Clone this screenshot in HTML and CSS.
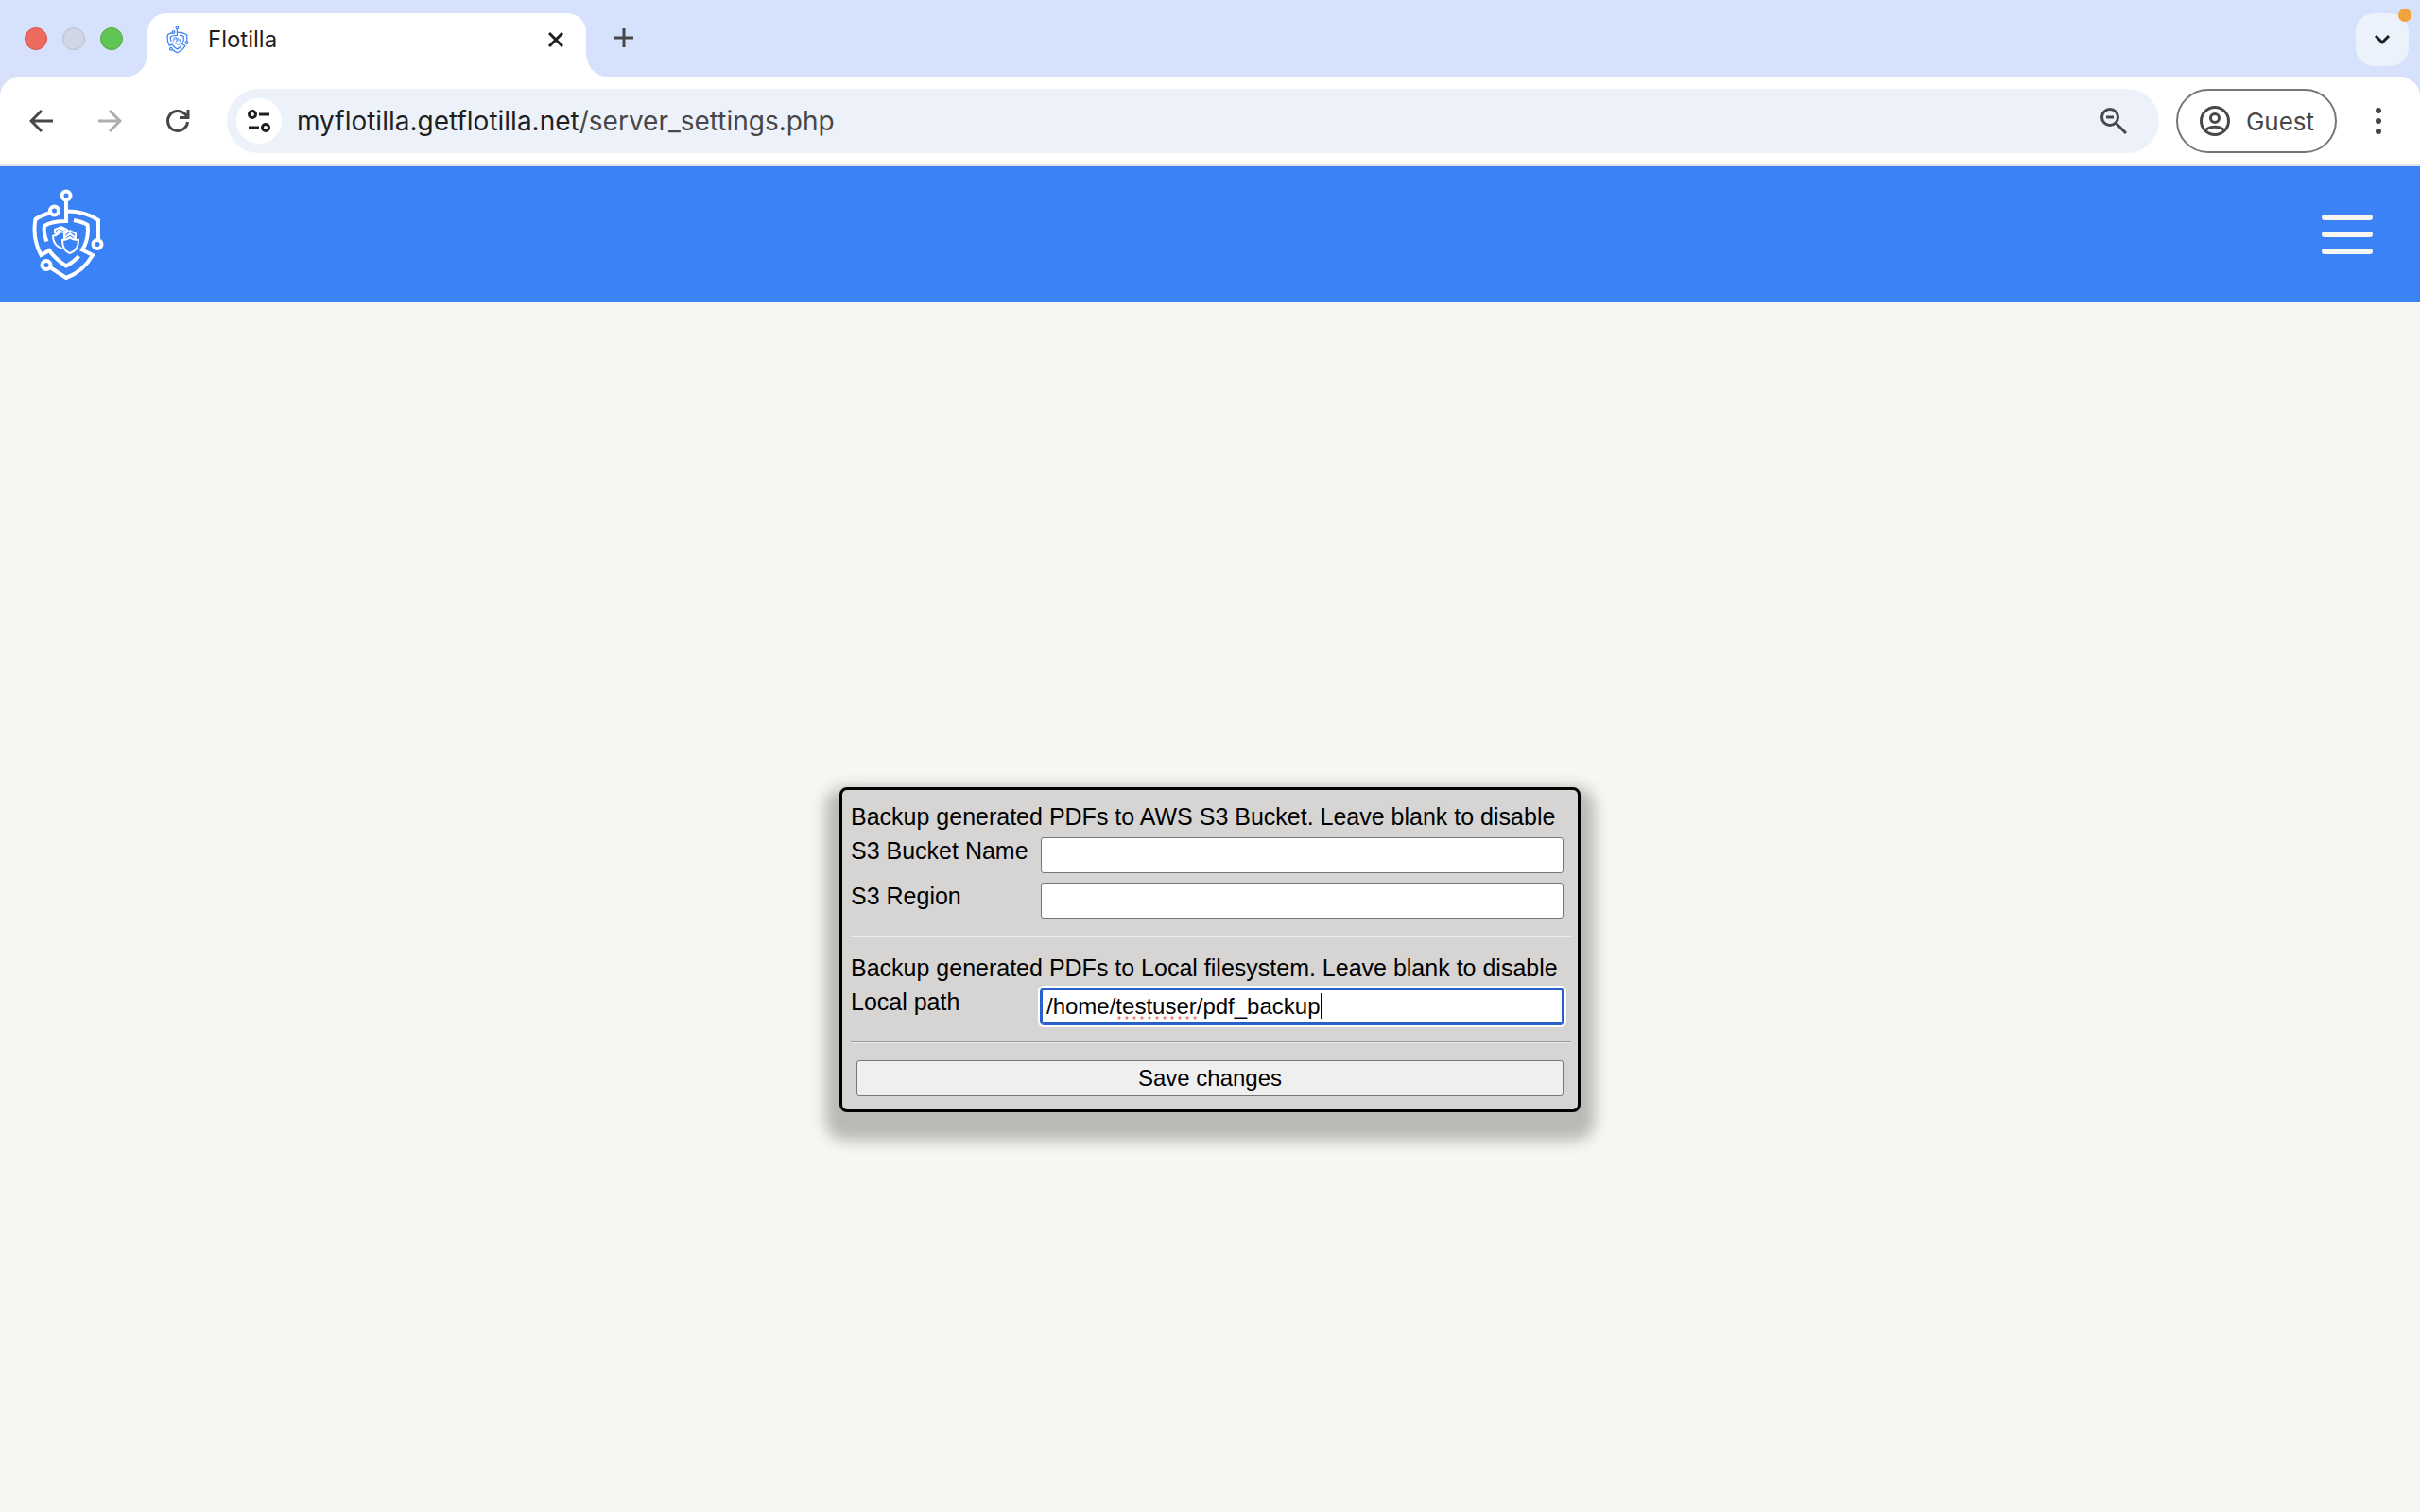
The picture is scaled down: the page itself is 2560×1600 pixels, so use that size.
FILE: index.html
```html
<!DOCTYPE html>
<html lang="en">
<head>
<meta charset="utf-8">
<title>Flotilla</title>
<link rel="stylesheet" href="styles.css">
</head>
<body>
<svg class="defs" aria-hidden="true">
  <symbol id="logo" viewBox="0 0 76 98">
    <g fill="none" stroke="currentColor" stroke-width="4">
      <circle cx="36" cy="7" r="4.500"/>
      <circle cx="23.500" cy="23" r="4.500"/>
      <circle cx="69" cy="58.500" r="4.500"/>
      <circle cx="15" cy="80.500" r="4.500"/>
      <path d="M36 12V34C28 34 19 35 13 39C12 45 13 50 15.500 55.500"/>
      <path d="M36 23.500C48 23.500 60 26 70 33V54"/>
      <path d="M19 25C13 27 8 29 3.500 32C1 46 4 60 9.500 70L18 65C23 72 29 77 36 81.500C41 79 46 75 49.500 71"/>
      <path d="M44 33C49 34 54 35 58.500 38C60 48 57 58 53 64.500L64 70C57 82 47 90 36 94L19 83"/>
    </g>
    <g fill="none" stroke="currentColor" stroke-width="2">
      <path d="M24 47V43L31 40L37 43V46M24 47L31 42L37 46M24 50L31 45L36 48M22 49C24 50 26 48 28 47M22 49C22 56 25 61 32 63"/>
      <path d="M32 54C35 54 38 53 40 51C42 53 45 54 49 54C49 61 46 66 40 68C34 66 32 61 32 54ZM34 53V47L40 44L46 47V53M34 52L40 47L46 52"/>
    </g>
  </symbol>
</svg>
<header class="browser">
  <div class="tabstrip">
    <div class="lights"><i class="light red"></i><i class="light grey"></i><i class="light green"></i></div>
    <div class="tab">
      <svg class="favicon"><use href="#logo"/></svg>
      <span class="tab-title">Flotilla</span>
      <button class="plain" aria-label="Close tab"><svg width="18" height="18" viewBox="0 0 18 18"><path d="M2 2L16 16M16 2L2 16" stroke="#1f1f1f" stroke-width="3"/></svg></button>
    </div>
    <button class="plain new-tab" aria-label="New tab"><svg width="20" height="20" viewBox="0 0 20 20"><path d="M10 0V20M0 10H20" stroke="#474747" stroke-width="3"/></svg></button>
    <button class="plain tab-search" aria-label="Search tabs"><svg width="18" height="12" viewBox="0 0 18 12"><path d="M2 2L9 9L16 2" fill="none" stroke="#1f1f1f" stroke-width="3"/></svg><span class="dot"></span></button>
  </div>
  <div class="toolbar">
    <button class="plain nav" aria-label="Back"><svg width="26" height="26" viewBox="0 0 26 26"><path d="M25 13H3M13 2L2 13L13 24" fill="none" stroke="#474747" stroke-width="3"/></svg></button>
    <button class="plain nav" aria-label="Forward"><svg width="26" height="26" viewBox="0 0 26 26"><path d="M1 13H23M13 2L24 13L13 24" fill="none" stroke="#adadad" stroke-width="3"/></svg></button>
    <button class="plain nav" aria-label="Reload"><svg width="26" height="26" viewBox="0 0 26 26"><path d="M23.500 14A10.500 10.500 0 1 1 20.500 5.500L24 9M24 1V9.500H15" fill="none" stroke="#474747" stroke-width="3"/></svg></button>
    <div class="omnibox">
      <button class="plain site-info" aria-label="Site information"><svg width="26" height="26" viewBox="0 0 26 26"><g fill="none" stroke="#1f1f1f" stroke-width="3"><circle cx="6" cy="6" r="3.500"/><path d="M13 6H24M2 20H13"/><circle cx="20" cy="20" r="3.500"/></g></svg></button>
      <div class="url">myflotilla.getflotilla.net<span class="path">/server_settings.php</span></div>
      <button class="plain zoom" aria-label="Zoom"><svg width="28" height="28" viewBox="0 0 28 28"><g fill="none" stroke="#474747" stroke-width="3"><circle cx="10" cy="10" r="8.500"/><path d="M16 16L27 27M6 10H14"/></g></svg></button>
    </div>
    <button class="plain guest"><svg width="34" height="34" viewBox="0 0 34 34"><g fill="none" stroke="#474747" stroke-width="3"><circle cx="17" cy="17" r="14.500"/><circle cx="17" cy="14" r="4.500"/><path d="M7 27C12 22 22 22 27 27"/></g></svg>Guest</button>
    <button class="plain kebab" aria-label="Menu"><svg width="6" height="28" viewBox="0 0 6 28" fill="#474747"><circle cx="3" cy="3" r="3"/><circle cx="3" cy="14" r="3"/><circle cx="3" cy="25" r="3"/></svg></button>
  </div>
</header>
<nav class="site-bar">
  <a href="#" aria-label="Home"><svg class="logo"><use href="#logo"/></svg></a>
  <button class="plain burger" aria-label="Open menu"><i></i><i></i><i></i></button>
</nav>
<main>
  <form class="panel">
    <p>Backup generated PDFs to AWS S3 Bucket. Leave blank to disable</p>
    <div class="row"><label for="bucket">S3 Bucket Name</label><input id="bucket" type="text"></div>
    <div class="row"><label for="region">S3 Region</label><input id="region" type="text"></div>
    <hr>
    <p>Backup generated PDFs to Local filesystem. Leave blank to disable</p>
    <div class="row"><label for="local">Local path</label><div class="field"><input class="active" id="local" type="text" value="/home/testuser/pdf_backup" spellcheck="false"><span class="overlay" aria-hidden="true"><span class="lead">/home/</span><span class="misspelt">testuser</span><span class="lead">/pdf_backup</span><span class="caret"></span></span></div></div>
    <hr>
    <button class="save" type="button">Save changes</button>
  </form>
</main>
</body>
</html>
```
FILE: styles.css
```css
* { box-sizing: border-box; }
body {
  margin: 0;
  min-height: 100vh;
  display: flex;
  flex-direction: column;
  background: #f7f6f2;
  color: #000;
  font-family: "Liberation Sans", Arial, sans-serif;
  font-size: 24px;
}
svg { display: block; flex: none; }
.defs { position: absolute; width: 0; height: 0; }
.plain {
  border: 0;
  padding: 0;
  background: none;
  font: inherit;
  color: inherit;
  display: flex;
  align-items: center;
  justify-content: center;
  flex: none;
}

/* Browser window */
.browser { background: #d6e1fb; font-family: Inter, sans-serif; color: #1f1f1f; }
.tabstrip { height: 82px; padding: 14px 12px 0 26px; display: flex; }
.lights { display: flex; gap: 16px; padding-top: 15px; width: 130px; }
.light { width: 24px; height: 24px; border-radius: 50%; border: 1px solid; }
.red { background: #ed6a5e; border-color: #d8574c; }
.grey { background: #d0d6e3; border-color: #b9bfcc; }
.green { background: #61c554; border-color: #50aa44; }
.tab {
  position: relative;
  width: 464px;
  padding: 0 23px 12px 20px;
  display: flex;
  align-items: center;
  background: #fff;
  border-radius: 20px 20px 0 0;
}
.tab::before, .tab::after {
  content: "";
  position: absolute;
  bottom: 0;
  width: 24px;
  height: 24px;
}
.tab::before { right: 100%; background: radial-gradient(circle at 0 0, transparent 23px, #fff 24px); }
.tab::after { left: 100%; background: radial-gradient(circle at 100% 0, transparent 23px, #fff 24px); }
.favicon { width: 24px; height: 30px; color: #3b82f6; }
.tab-title { flex: 1; margin-left: 20px; line-height: 24px; }
.new-tab { width: 40px; height: 52px; margin: 0 auto 0 20px; }
.tab-search { position: relative; width: 56px; height: 56px; border-radius: 20px; background: #ebf2fc; }
.dot { position: absolute; top: -5px; right: -3px; width: 14px; height: 14px; border-radius: 50%; background: #f2a33c; }
.toolbar {
  height: 94px;
  padding: 0 41px 0 8px;
  display: flex;
  align-items: center;
  background: #fff;
  border-bottom: 2px solid #e0e2e3;
  border-radius: 20px 20px 0 0;
}
.nav { width: 72px; height: 68px; }
.omnibox {
  flex: 1;
  height: 68px;
  margin: 0 18px 0 16px;
  padding: 0 34px 0 10px;
  display: flex;
  align-items: center;
  background: #edf2fa;
  border-radius: 34px;
  font-size: 28px;
}
.site-info { width: 48px; height: 48px; border-radius: 50%; background: #fff; }
.url { flex: 1; margin-left: 16px; }
.path { color: #474747; }
.guest {
  width: 170px;
  height: 68px;
  gap: 16px;
  border: 2px solid #747775;
  border-radius: 34px;
  color: #474747;
  font-size: 26px;
}
.kebab { width: 6px; margin-left: 41px; }

/* Site navigation */
.site-bar {
  height: 144px;
  padding: 2px 50px 0 34px;
  display: flex;
  align-items: center;
  justify-content: space-between;
  background: #3b82f6;
}
.logo { width: 76px; height: 98px; color: #fff; }
.burger { flex-direction: column; gap: 12px; padding-bottom: 2px; }
.burger i { width: 54px; height: 6px; border-radius: 3px; background: #f7f6f2; }

/* Settings form */
main { flex: 1; padding-top: 90px; display: grid; place-items: center; }
.panel {
  width: 784px;
  padding: 12px 7px 14px 9px;
  background: #d6d5d3;
  border: 3px solid #000;
  border-radius: 8px;
  box-shadow: 0 15px 15px 15px #bab9b6;
}
.panel p, .row label { font-size: 25px; }
.panel p { margin: 0; line-height: 32px; white-space: nowrap; }
.row { display: flex; padding: 6px 8px 4px 0; }
.row label { width: 201px; line-height: 28px; }
.row input, .save {
  height: 38px;
  border: 1px solid #767676;
  border-radius: 3px;
  color: #000;
  font: inherit;
}
.row input { flex: 1; min-width: 0; padding: 0 6px; background: #fff; }
.field { position: relative; flex: 1; display: flex; }
.row .active { padding: 0 4px; border: 2px solid #2860cc; outline: 1px solid #2860cc; box-shadow: 0 0 0 3px #fff; }
.overlay {
  position: absolute;
  inset: 5px auto auto 6px;
  display: flex;
  line-height: 28px;
  color: transparent;
  pointer-events: none;
}
.misspelt { background: radial-gradient(circle, #f07a6e 1px, transparent 2px) 0 24px / 8px 4px repeat-x; }
.caret { width: 2px; height: 27px; background: #000; }
.panel hr { height: 2px; margin: 14px 0 16px; border: 0; border-top: 1px solid #979797; border-bottom: 1px solid #eee; }
.save { display: block; width: calc(100% - 14px); margin: 18px 8px 0 6px; padding: 0; background: #efefef; }
```
